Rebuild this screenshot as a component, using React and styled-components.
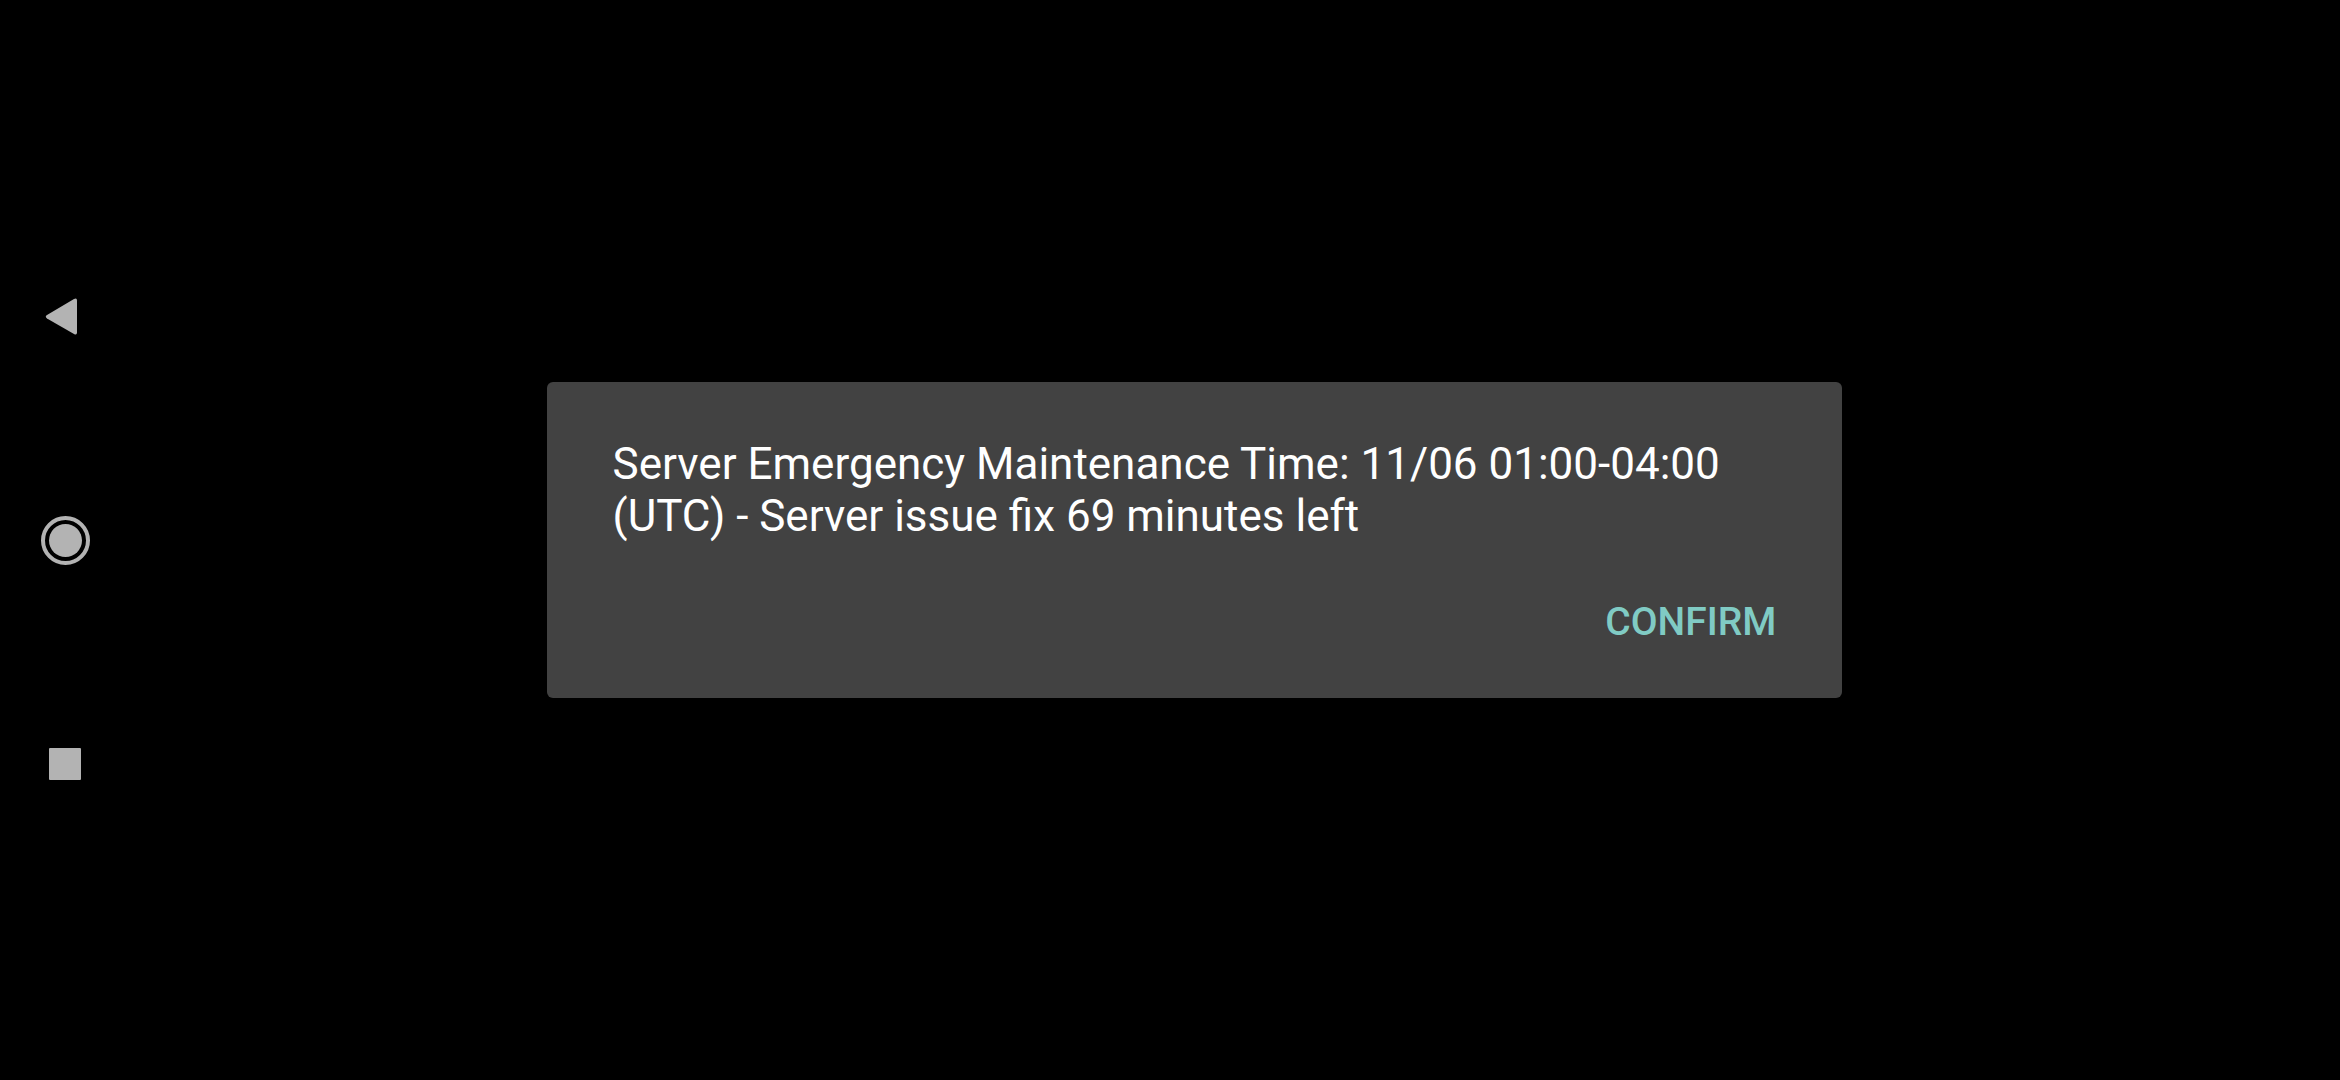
import React from 'react';
import styled, { createGlobalStyle } from 'styled-components';

const GlobalStyle = createGlobalStyle`
  * {
    box-sizing: border-box;
  }
  body {
    margin: 0;
    background-color: #000;
    font-family: Roboto, "Liberation Sans", sans-serif;
  }
`;

const Screen = styled.div`
  display: flex;
  min-height: 100vh;
  /* room for the camera cutout */
  padding-right: 81px;
  background-color: #000;
`;

const NavBar = styled.nav`
  flex: none;
  width: 130px;
  display: flex;
  flex-direction: column;
  align-items: center;
  justify-content: center;
`;

const NavButton = styled.button`
  display: flex;
  align-items: center;
  justify-content: center;
  width: 100%;
  height: 224px;
  padding: 0;
  border: 0;
  background: none;
  color: #b3b3b3;
  cursor: pointer;

  svg {
    display: block;
    width: 60px;
    height: 60px;
  }
`;

const Content = styled.main`
  flex: 1;
  display: flex;
  align-items: center;
  justify-content: center;
`;

const DialogWindow = styled.div`
  width: 65%;
  padding: 0 44px;
`;

const Dialog = styled.section`
  padding: 56px 66px 52px;
  border-radius: 6px;
  background-color: #424242;
`;

const Message = styled.p`
  margin: 0;
  color: #fff;
  font-size: 44px;
  line-height: 52px;
`;

const Actions = styled.div`
  display: flex;
  justify-content: flex-end;
  margin-top: 56px;
`;

const TextButton = styled.button`
  padding: 0;
  border: 0;
  background: none;
  color: #80cbc4;
  font-family: inherit;
  font-size: 39px;
  font-weight: 500;
  line-height: 48px;
  text-transform: uppercase;
  cursor: pointer;
`;

const BackIcon = () => (
  <svg viewBox="0 0 60 60" fill="currentColor" aria-hidden="true">
    <path d="M12 29 L39 13 Q42 11.5 42 14.5 V46.5 Q42 49.500 39 48 L12 32.500 Q9.500 30.700 12 29 Z" />
  </svg>
);

const HomeIcon = () => (
  <svg viewBox="0 0 60 60" aria-hidden="true">
    <circle cx="30.5" cy="30.5" r="22.5" fill="none" stroke="currentColor" strokeWidth="4" />
    <circle cx="30.5" cy="30.5" r="16.5" fill="currentColor" />
  </svg>
);

const RecentsIcon = () => (
  <svg viewBox="0 0 60 60" fill="currentColor" aria-hidden="true">
    <rect x="14" y="14" width="32" height="32" rx="1" />
  </svg>
);

const App = () => {
  return (
    <>
      <GlobalStyle />
      <Screen>
        <NavBar>
          <NavButton aria-label="Back"><BackIcon /></NavButton>
          <NavButton aria-label="Home"><HomeIcon /></NavButton>
          <NavButton aria-label="Recent apps"><RecentsIcon /></NavButton>
        </NavBar>
        <Content>
          <DialogWindow>
            <Dialog role="alertdialog" aria-describedby="message">
              <Message id="message">
                Server Emergency Maintenance Time: 11/06 01:00-04:00 (UTC) - Server issue fix 69 minutes left
              </Message>
              <Actions>
                <TextButton>Confirm</TextButton>
              </Actions>
            </Dialog>
          </DialogWindow>
        </Content>
      </Screen>
    </>
  );
};

export default App;
